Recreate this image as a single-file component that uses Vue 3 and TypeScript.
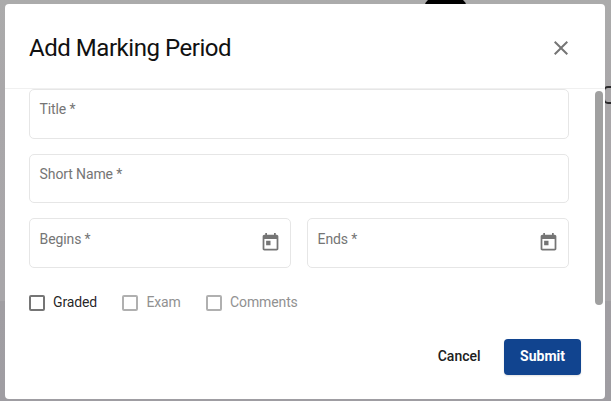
<script setup lang="ts">
import { ref } from 'vue'

interface DateField {
  id: string
  label: string
}

interface CheckOption {
  id: string
  label: string
  disabled: boolean
}

const textFields: string[] = ['Title *', 'Short Name *']
const dateFields: DateField[] = [
  { id: 'begins', label: 'Begins *' },
  { id: 'ends', label: 'Ends *' },
]
const options: CheckOption[] = [
  { id: 'graded', label: 'Graded', disabled: false },
  { id: 'exam', label: 'Exam', disabled: true },
  { id: 'comments', label: 'Comments', disabled: true },
]
const checked = ref<string[]>([])

function toggle(option: CheckOption): void {
  if (option.disabled) return
  checked.value = checked.value.includes(option.id)
    ? checked.value.filter((id) => id !== option.id)
    : [...checked.value, option.id]
}
</script>

<template>
  <div class="backdrop">
    <span class="behind-pill"></span>
    <span class="behind-ring"></span>
    <section class="dialog" role="dialog">
      <header class="header">
        <h2 class="title">Add Marking Period</h2>
        <button class="close" type="button">
          <svg width="24" height="24" viewBox="0 0 24 24">
            <path
              fill="currentColor"
              d="M19 6.41L17.59 5 12 10.59 6.41 5 5 6.41 10.59 12 5 17.59 6.41 19 12 13.41 17.59 19 19 17.59 13.41 12z"
            />
          </svg>
        </button>
      </header>
      <div class="content">
        <form class="form">
          <div v-for="label in textFields" :key="label" class="field">
            <label class="label">{{ label }}</label>
          </div>
          <div class="dates">
            <div v-for="field in dateFields" :key="field.id" class="field date">
              <label class="label">{{ field.label }}</label>
              <svg class="calendar" width="21" height="21" viewBox="0 0 24 24">
                <path
                  fill="currentColor"
                  d="M19 3h-1V1h-2v2H8V1H6v2H5c-1.11 0-1.99.9-1.99 2L3 19c0 1.1.89 2 2 2h14c1.1 0 2-.9 2-2V5c0-1.1-.9-2-2-2zm0 16H5V8h14v11zM7 10h5v5H7z"
                />
              </svg>
            </div>
          </div>
          <div class="options">
            <div
              v-for="option in options"
              :key="option.id"
              class="option"
              :class="{ disabled: option.disabled, checked: checked.includes(option.id) }"
              @click="toggle(option)"
            >
              <span class="box"></span>
              <span>{{ option.label }}</span>
            </div>
          </div>
        </form>
        <div class="track"><div class="thumb"></div></div>
      </div>
      <footer class="footer">
        <button class="btn" type="button">Cancel</button>
        <button class="btn primary" type="button">Submit</button>
      </footer>
    </section>
  </div>
</template>

<style>
body {
  margin: 0;
  overflow: hidden;
}
</style>

<style scoped>
.backdrop {
  position: relative;
  box-sizing: border-box;
  width: 611px;
  height: 401px;
  padding: 4px 6px 2px 5px;
  overflow: hidden;
  background: linear-gradient(#ababab 0, #a9a7a9 90px, #a8a6a9 301px, #a09ea2 301px, #9f9da2 100%);
  font-family: Roboto, sans-serif;
  font-size: 14px;
  letter-spacing: -0.12px;
  color: rgba(0, 0, 0, 0.87);
}
.behind-pill {
  position: absolute;
  left: 423.5px;
  top: -3.5px;
  width: 43px;
  height: 30px;
  border-radius: 12px;
  background: #000;
}
.behind-ring {
  position: absolute;
  box-sizing: border-box;
  left: 603px;
  top: 86px;
  width: 20px;
  height: 18px;
  border: 2.5px solid #29282a;
  border-radius: 5px;
}
.dialog {
  position: relative;
  display: flex;
  flex-direction: column;
  height: 395px;
  border-radius: 4px;
  background: #fff;
}
.header {
  box-sizing: border-box;
  display: flex;
  align-items: center;
  justify-content: space-between;
  height: 85px;
  padding: 3px 32px 0 24px;
  border-bottom: 1px solid #f0f0f0;
}
.title {
  margin: 0;
  font-size: 24px;
  line-height: 32px;
  font-weight: 400;
  letter-spacing: -0.46px;
  color: #111;
}
.close {
  display: flex;
  padding: 0;
  border: 0;
  background: none;
  color: #757575;
}
.content {
  display: flex;
  height: 230px;
}
.form {
  width: 540px;
  padding-left: 24px;
}
.field {
  box-sizing: border-box;
  height: 50px;
  margin-bottom: 15px;
  padding: 11px 9.6px;
  border: 1px solid #e6e6e6;
  border-radius: 5px;
}
.field:nth-child(2) {
  height: 49px;
}
.label {
  display: block;
  line-height: 16px;
  color: #757575;
}
.dates {
  display: grid;
  grid-template-columns: 262px 262px;
  column-gap: 16px;
}
.field.date {
  display: flex;
  justify-content: space-between;
  height: 50px;
  padding: 12px 9px 0 9.6px;
}
.calendar {
  color: #757575;
  margin-top: 1px;
}
.options {
  display: flex;
  padding-top: 11px;
}
.option {
  display: flex;
  align-items: center;
  gap: 8px;
  height: 16px;
  margin-right: 25.3px;
  line-height: 16px;
}
.option.disabled {
  color: #919191;
}
.box {
  box-sizing: border-box;
  width: 16px;
  height: 16px;
  margin-top: 2px;
  border: 2px solid #757575;
  border-radius: 2px;
}
.disabled .box {
  border-color: #b0b0b0;
}
.checked .box {
  background: #11448f;
}
.track {
  width: 8px;
  margin-left: 26px;
  padding-top: 2px;
}
.thumb {
  height: 214px;
  border-radius: 4px;
  background: #a0a0a0;
}
.footer {
  display: flex;
  justify-content: flex-end;
  padding: 20px 24px 0;
}
.btn {
  height: 36px;
  padding: 0 16px 2px;
  border: 0;
  border-radius: 4px;
  background: none;
  color: #202020;
  font: 500 14px/34px Roboto, sans-serif;
  margin-left: 7.5px;
}
.btn.primary {
  background: #11448f;
  color: #fff;
  font-weight: 700;
  box-shadow: 0 1px 2px rgba(0, 0, 0, 0.12);
}
</style>
